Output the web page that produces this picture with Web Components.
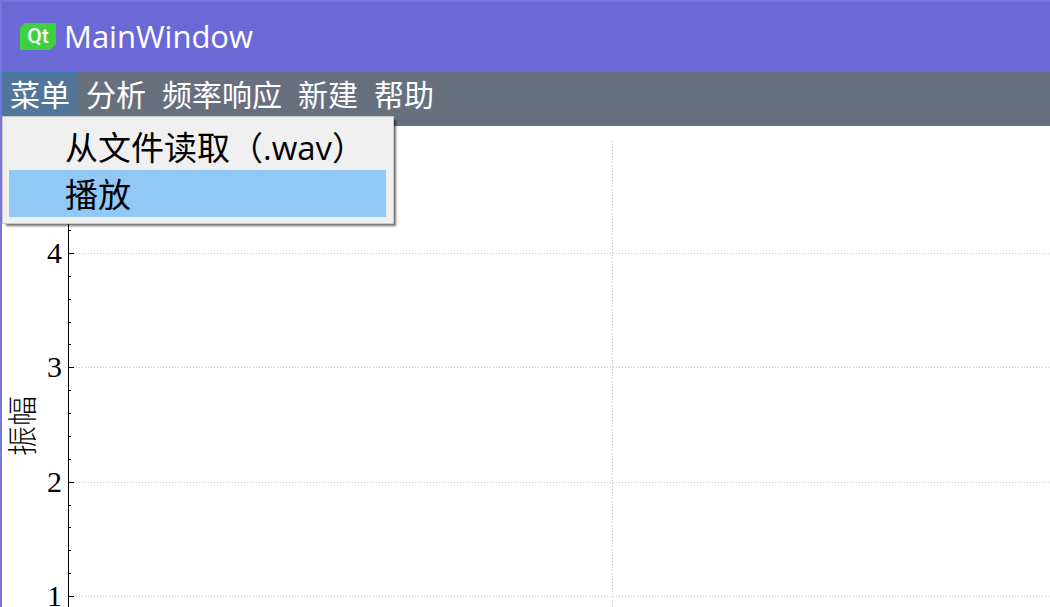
<!DOCTYPE html>
<html lang="zh-CN">
<head>
<meta charset="utf-8">
<title>MainWindow</title>
<style>
html, body { margin: 0; height: 100%; }
body { overflow: hidden; font-family: "Open Sans", "Noto Sans CJK SC", sans-serif; }
</style>
</head>
<body>
<app-window>
  <title-bar slot="title">MainWindow</title-bar>
  <menu-bar slot="menu">
    <menu-entry active>菜单
      <menu-popup slot="popup">
        <menu-action>从文件读取（.wav）</menu-action>
        <menu-action selected>播放</menu-action>
      </menu-popup>
    </menu-entry>
    <menu-entry>分析</menu-entry>
    <menu-entry>频率响应</menu-entry>
    <menu-entry>新建</menu-entry>
    <menu-entry>帮助</menu-entry>
  </menu-bar>
  <amplitude-plot label="振幅"></amplitude-plot>
</app-window>
<script>
function define(name, html, setup) {
  const template = document.createElement('template');
  template.innerHTML = html;
  customElements.define(name, class extends HTMLElement {
    constructor() {
      super();
      this.attachShadow({ mode: 'open' }).append(template.content.cloneNode(true));
    }
    connectedCallback() { if (setup) setup(this); }
  });
}

define('app-window', `
  <style>
    :host { display: flex; flex-direction: column; box-sizing: border-box; height: 100%;
      border: solid #7876d9; border-width: 2px 0 0 2px; background: #fff; }
    main { flex: 1; min-height: 0; display: flex; }
  </style>
  <slot name="title"></slot>
  <slot name="menu"></slot>
  <main><slot></slot></main>`);

define('title-bar', `
  <style>
    :host { display: flex; align-items: center; gap: 8px; height: 70px; padding: 0 0 2px 18px;
      box-sizing: border-box; background: #6b69d6; color: #fff; }
    svg { display: block; }
    h1 { margin: 0; font-size: 31px; line-height: 40px; font-weight: 400; }
  </style>
  <svg width="36" height="27" viewBox="0 0 36 27" aria-hidden="true">
    <path d="M5 0H36V21L30 27H0V5Z" fill="#3dd13f"/>
    <text x="18" y="20" text-anchor="middle" font-family="Roboto" font-weight="500" font-size="21" fill="#fff">Qt</text>
  </svg>
  <h1><slot></slot></h1>`);

define('menu-bar', `
  <style>
    :host { display: flex; align-items: flex-start; padding-bottom: 10px; background: #68707f; color: #fff; }
  </style>
  <slot></slot>`);

define('menu-entry', `
  <style>
    :host { display: block; position: relative; }
    button { display: block; box-sizing: border-box; height: 44px; margin: 0; padding: 2px 7px 0;
      border: 1px solid transparent; background: none; color: inherit; white-space: nowrap;
      font-family: inherit; font-size: 30px; line-height: 40px; font-weight: 400; }
    :host([active]) button { background: #51769a; border-color: #3f7bac; }
  </style>
  <button type="button"><slot></slot></button>
  <slot name="popup"></slot>`);

define('menu-popup', `
  <style>
    :host { display: block; position: absolute; z-index: 1; top: 100%; left: 0; box-sizing: border-box;
      min-width: 392px; padding: 6px 7px 6px 6px; border: 1px solid #c8c8c8; background: #f0f0f0; color: #000;
      box-shadow: 3px 3px 2px -1px #0000008c; }
  </style>
  <slot></slot>`);

define('menu-action', `
  <style>
    :host { display: block; }
    button { display: block; width: 100%; height: 47px; margin: 0; padding: 2px 20px 0 56px; border: 0;
      background: none; color: inherit; text-align: left; white-space: nowrap;
      font-family: inherit; font-size: 33px; line-height: 45px; font-weight: 400; }
    :host([selected]) button { background: #91c8f6; }
  </style>
  <button type="button"><slot></slot></button>`);

define('amplitude-plot', `
  <style>
    :host { display: block; flex: 1; min-width: 0; overflow: hidden; }
    svg { display: block; width: 100%; height: 100%; }
    line { shape-rendering: crispEdges; stroke: #000; }
    .grid { stroke: #c4c4c4; stroke-dasharray: 1 2; }
    text { font-family: "Liberation Serif", "Noto Sans CJK SC", serif; font-size: 30px; fill: #000; }
    .axis-label { font-weight: 300; }
  </style>
  <svg role="img"></svg>`, host => {
  const svg = host.shadowRoot.querySelector('svg');
  const add = (tag, attrs, text) => {
    const el = document.createElementNS('http://www.w3.org/2000/svg', tag);
    for (const key in attrs) el.setAttribute(key, attrs[key]);
    if (text) el.textContent = text;
    svg.append(el);
  };
  const axisX = 66, top = 15, unit = 343 / 3;
  const yOf = value => Math.round(127 + (4 - value) * unit);
  // Half-pixel centres keep one-pixel strokes on the pixel grid.
  const h = (y, x1, x2, cls) => add('line', { x1, x2, y1: y + .5, y2: y + .5, class: cls });
  const v = (x, cls) => add('line', { x1: x + .5, x2: x + .5, y1: top, y2: '100%', class: cls });
  v(610, 'grid');
  v(axisX, 'axis');
  for (let step = 0; step < 20; step++) {
    const value = (24 - step) / 5, y = yOf(value);
    if (step % 5 === 4) {
      h(y, axisX + 8, '100%', 'grid');
      h(y, axisX, axisX + 6, 'tick');
      add('text', { x: 60, y: y + 10, 'text-anchor': 'end' }, String(value));
    } else {
      h(y, axisX, axisX + 3, 'tick');
    }
  }
  add('text', { x: 0, y: 0, 'text-anchor': 'middle', transform: 'translate(31 300) rotate(-90)', class: 'axis-label' },
    host.getAttribute('label'));
});
</script>
</body>
</html>
